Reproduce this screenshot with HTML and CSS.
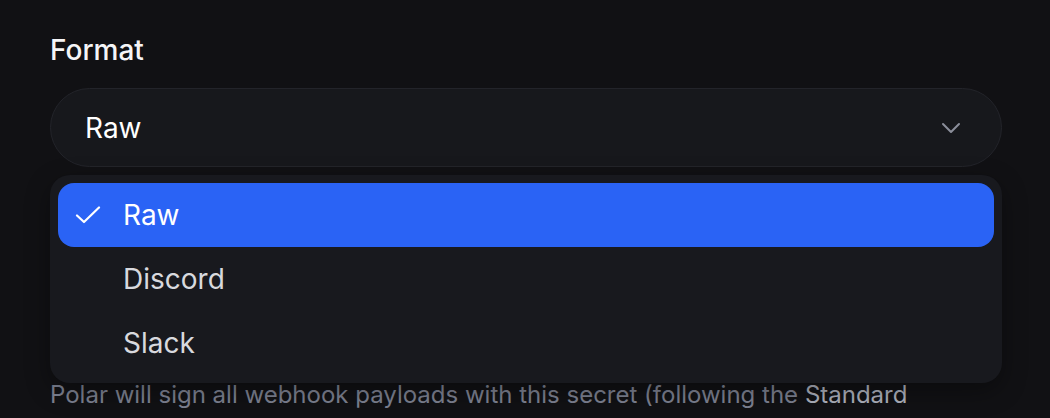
FILE: index.html
```html
<!DOCTYPE html>
<html lang="en">
<head>
  <meta charset="UTF-8">
  <meta name="viewport" content="width=device-width, initial-scale=1.0">
  <title>Webhook format</title>
  <link rel="stylesheet" href="styles.css">
</head>
<body>
  <div class="field">
    <label class="field-label">Format</label>
    <div class="select">
      <button class="select-trigger">
        <span>Raw</span>
        <svg class="chevron" width="20" height="12" viewBox="0 0 20 12" fill="none">
          <path d="M2 2l8 8 8-8" stroke="#8b8e9a" stroke-width="2" stroke-linecap="round" stroke-linejoin="round"/>
        </svg>
      </button>
      <ul class="select-menu">
        <li class="select-item selected">
          <svg class="check" width="26" height="18" viewBox="0 0 26 18" fill="none">
            <path d="M2 9.5l7 6.5L24 1.5" stroke="#fff" stroke-width="2.2" stroke-linecap="round" stroke-linejoin="round"/>
          </svg>
          Raw
        </li>
        <li class="select-item">Discord</li>
        <li class="select-item">Slack</li>
      </ul>
    </div>
    <p class="field-desc">Polar will sign all webhook payloads with this secret (following the <a href="#">Standard Webhooks</a> specification) so you can validate that the request is coming from Polar.</p>
  </div>
</body>
</html>
```

FILE: styles.css
```css
* { box-sizing: border-box; margin: 0; padding: 0; }
body { background: #111114; font-family: Inter, "Noto Sans", sans-serif; color: #fff; overflow: hidden; }
.field { padding: 32px 48px 0 50px; }
.field-label { display: block; font-size: 28px; font-weight: 500; line-height: 36px; margin-bottom: 20px; color: #f5f5f7; }
.select { position: relative; }
.select-trigger { width: 100%; height: 79px; display: flex; align-items: center; justify-content: space-between; padding: 0 40px 0 34px; background: #17181c; border: 1px solid #23242a; border-radius: 40px; font-family: inherit; font-size: 28px; color: #fff; text-align: left; }
.chevron { display: block; }
.select-menu { position: absolute; top: 87px; left: 0; right: 0; list-style: none; padding: 8px; background: #18191e; border-radius: 20px; box-shadow: 0 8px 24px rgba(0,0,0,0.35); z-index: 10; }
.select-item { position: relative; height: 64px; display: flex; align-items: center; padding-left: 65px; font-size: 28px; color: #d8d9de; border-radius: 16px; }
.select-item.selected { background: #2a63f5; color: #fff; }
.check { position: absolute; left: 17px; top: 23px; }
.field-desc { margin-top: 210px; font-size: 24px; line-height: 36px; color: #7d8191; }
.field-desc a { color: #aeb1bd; text-decoration: none; }
```
